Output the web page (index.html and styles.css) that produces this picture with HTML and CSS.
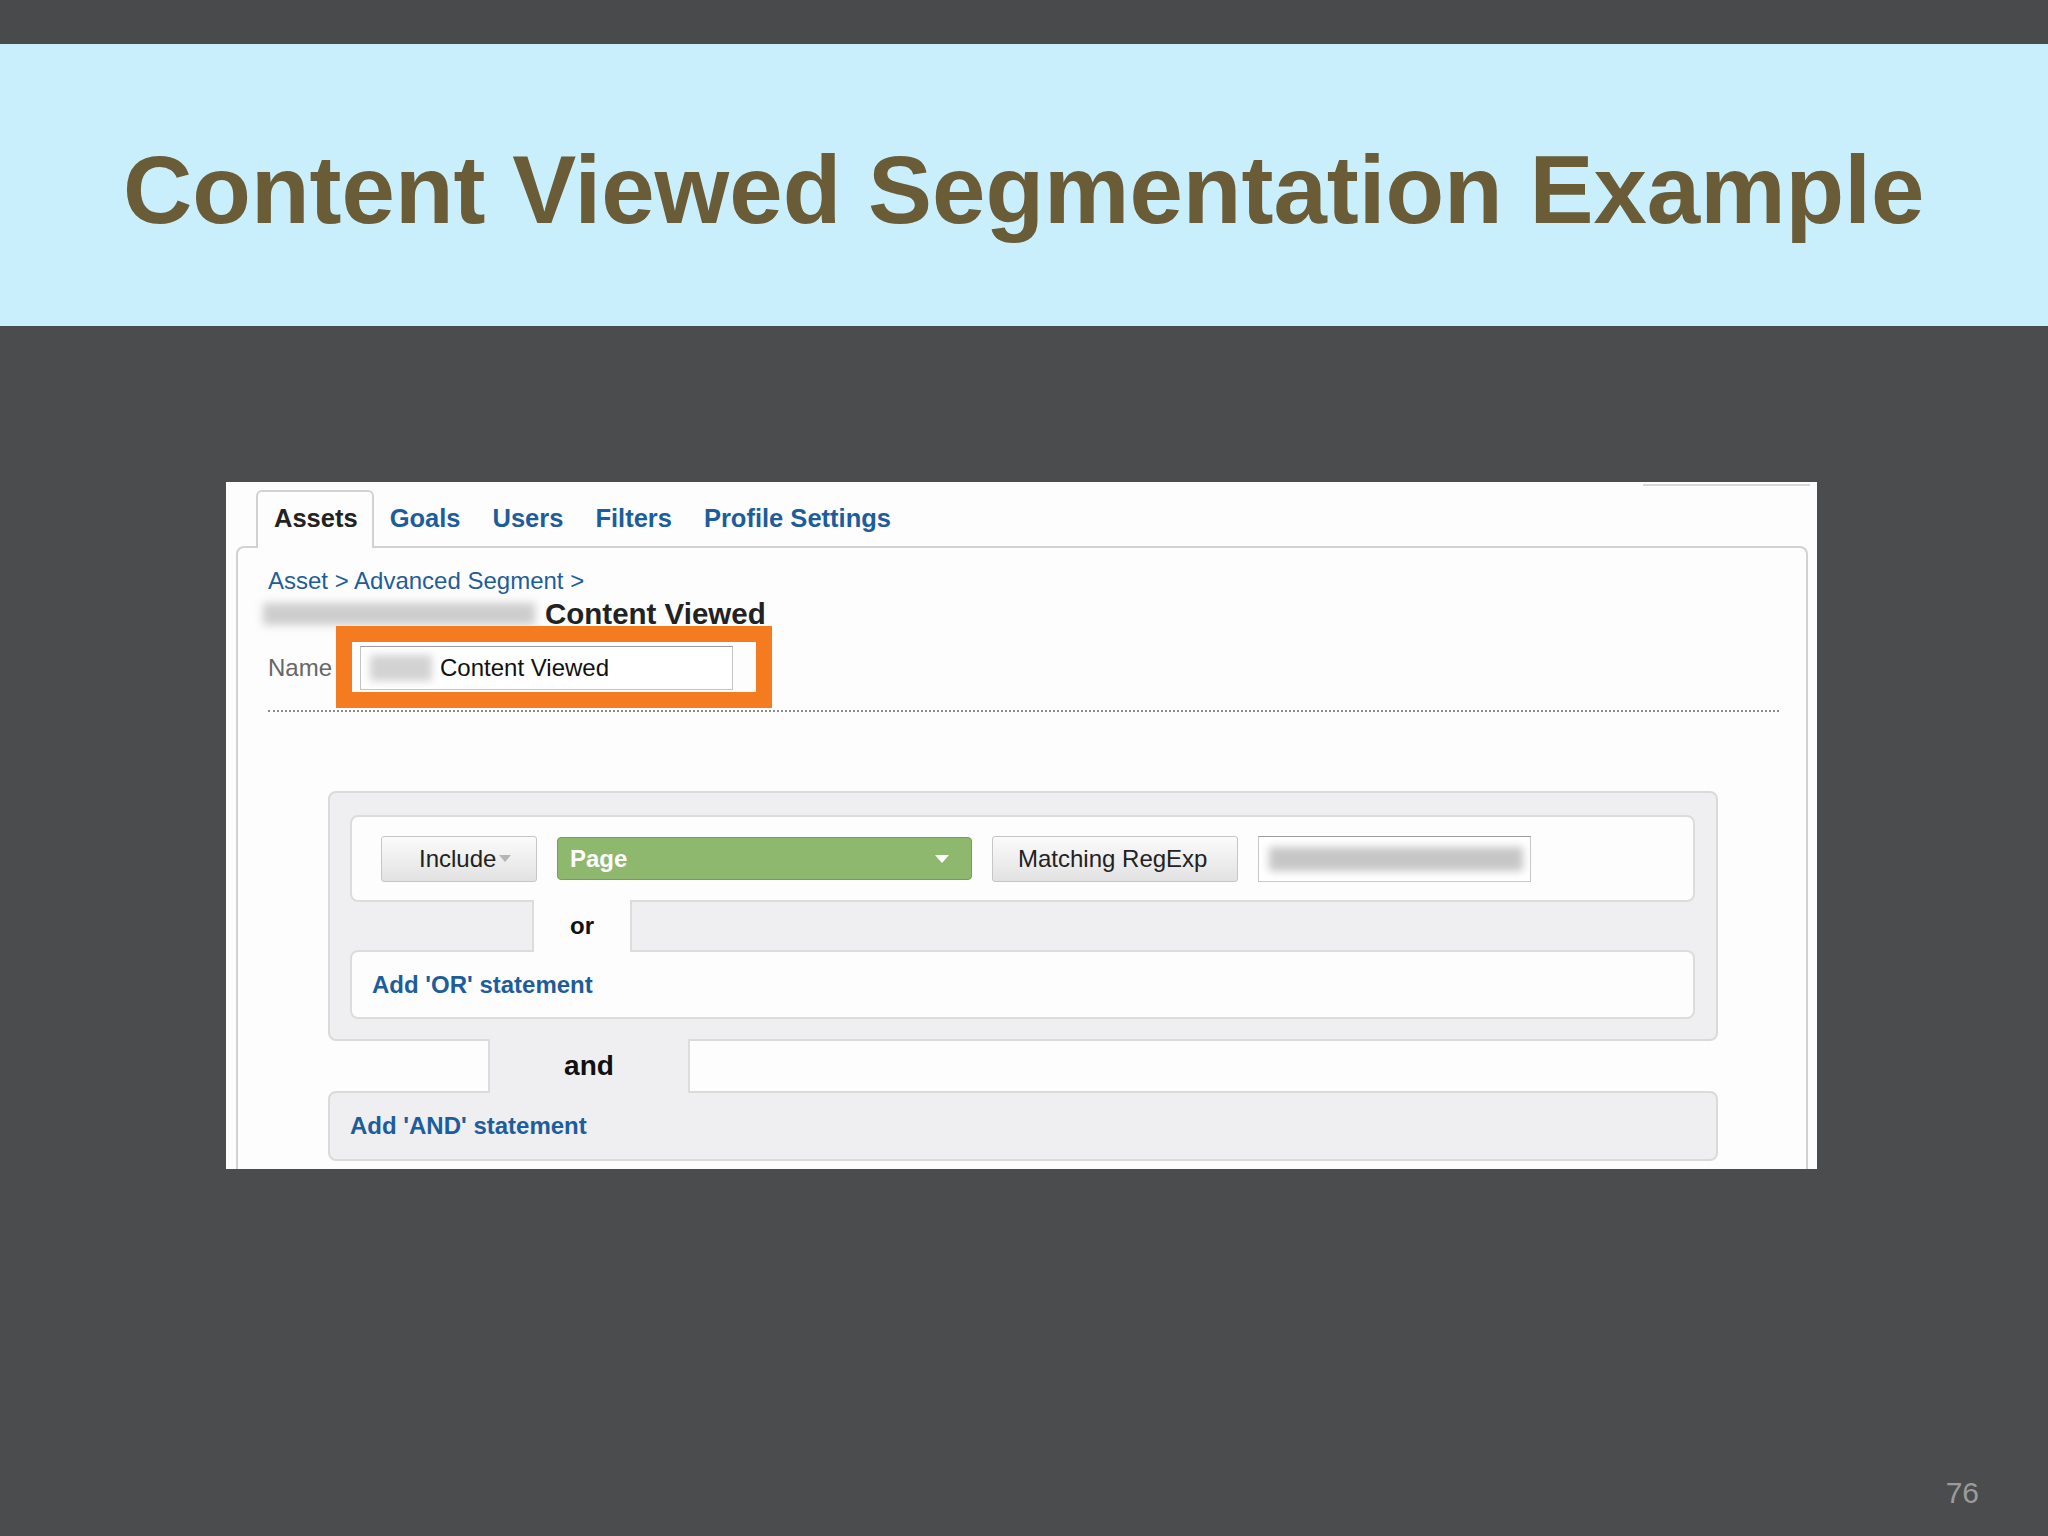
FILE: index.html
```html
<!DOCTYPE html>
<html lang="en">
<head>
<meta charset="utf-8">
<title>Content Viewed Segmentation Example</title>
<link rel="stylesheet" href="styles.css">
</head>
<body>
<div class="slide">
  <div class="topbar"></div>
  <header class="banner">
    <h1 class="title">Content Viewed Segmentation Example</h1>
  </header>
  <main class="stage">
    <div class="shot">
      <div class="shot-topline"></div>
      <nav class="tabs">
        <span class="tab tab-active">Assets</span>
        <span class="tab">Goals</span>
        <span class="tab">Users</span>
        <span class="tab">Filters</span>
        <span class="tab">Profile Settings</span>
      </nav>
      <section class="panel">
        <div class="crumb">Asset &gt; Advanced Segment &gt;</div>
        <div class="heading"><span class="blur blur-heading"></span><span class="heading-text">Content Viewed</span></div>
        <div class="name-row">
          <span class="name-label">Name</span>
          <div class="name-input"><span class="blur blur-name"></span><span class="name-value">Content Viewed</span></div>
          <div class="highlight"></div>
        </div>
        <div class="dotted"></div>
        <div class="segment">
          <div class="seg-box">
            <div class="cond-row">
              <span class="btn btn-include">Include<svg class="caret-gray" width="12" height="7" viewBox="0 0 12 7"><path d="M0 0h12L6 7z" fill="#b5b5b5"/></svg></span>
              <span class="dim-select">Page<svg class="caret-white" width="14" height="8" viewBox="0 0 14 8"><path d="M0 0h14L7 8z" fill="#ffffff"/></svg></span>
              <span class="btn btn-match">Matching RegExp</span>
              <span class="value-input"><span class="blur blur-value"></span></span>
            </div>
            <div class="conn conn-or">
              <div class="or-left"></div>
              <div class="notch or-notch">or</div>
            </div>
            <div class="add-box add-or">Add 'OR' statement</div>
          </div>
          <div class="conn conn-and">
            <div class="and-left"></div>
            <div class="notch and-notch">and</div>
          </div>
          <div class="add-and">Add 'AND' statement</div>
        </div>
      </section>
    </div>
  </main>
  <footer class="footer"><span class="page-num">76</span></footer>
</div>
</body>
</html>
```
FILE: styles.css
```css
html, body {
  margin: 0;
  padding: 0;
  background: #4a4c4e;
}
body {
  width: 2048px;
  height: 1536px;
  overflow: hidden;
  font-family: "Liberation Sans", Arial, Helvetica, sans-serif;
}
.slide {
  display: flex;
  flex-direction: column;
  width: 2048px;
  height: 1536px;
}
.topbar {
  height: 44px;
  background: #484a4c;
}
.banner {
  height: 282px;
  box-sizing: border-box;
  background: #c9eefc;
  padding: 98px 0 0 123px;
}
.title {
  margin: 0;
  font-size: 96px;
  line-height: 96px;
  font-weight: bold;
  color: #6a5c37;
  white-space: nowrap;
}
.stage {
  margin-top: 156px;
  padding-left: 226px;
}
.shot {
  width: 1591px;
  height: 687px;
  box-sizing: border-box;
  background: #fdfdfd;
  padding: 0 9px 0 10px;
  overflow: hidden;
  display: flex;
  flex-direction: column;
}
.shot-topline {
  align-self: flex-end;
  width: 167px;
  height: 2px;
  margin: 2px -2px 0 0;
  background: #d9d9d9;
}
.tabs {
  display: flex;
  height: 56px;
  margin: 4px 0 0 20px;
  font-size: 25.5px;
  font-weight: bold;
  color: #1d5d9b;
}
.tab {
  padding: 0 16px;
  line-height: 56px;
  white-space: nowrap;
}
.tab-active {
  position: relative;
  z-index: 1;
  height: 58px;
  box-sizing: border-box;
  line-height: 52px;
  padding: 0 14px 0 16px;
  color: #222222;
  background: #fdfdfd;
  border: 2px solid #d2d2d2;
  border-bottom: none;
  border-radius: 6px 6px 0 0;
}
.panel {
  flex: 1;
  border: 2px solid #d2d2d2;
  border-bottom: none;
  border-radius: 8px 8px 0 0;
  padding: 18px 27px 0 30px;
  background: #fdfdfd;
}
.crumb {
  font-size: 24px;
  line-height: 30px;
  color: #1d5d9b;
}
.heading {
  display: flex;
  align-items: center;
  margin-top: 3px;
  height: 30px;
}
.blur {
  display: block;
  background: #c3c3c3;
  filter: blur(4px);
}
.blur-heading {
  width: 272px;
  height: 22px;
  margin-left: -5px;
  margin-right: 10px;
  background: #cdcdcd;
}
.heading-text {
  font-size: 29.5px;
  font-weight: bold;
  color: #222222;
  line-height: 30px;
}
.name-row {
  position: relative;
  display: flex;
  align-items: center;
  margin-top: 17px;
  height: 44px;
}
.name-label {
  font-size: 24px;
  color: #666666;
  width: 92px;
}
.name-input {
  display: flex;
  align-items: center;
  width: 373px;
  height: 44px;
  box-sizing: border-box;
  border: 1px solid #c4c4c4;
  border-top-color: #9a9a9a;
  background: #ffffff;
  padding-left: 9px;
}
.blur-name {
  width: 62px;
  height: 26px;
  margin-right: 8px;
  background: #d2d2d2;
}
.name-value {
  font-size: 24px;
  color: #111111;
}
.highlight {
  position: absolute;
  left: 68px;
  top: -20px;
  width: 436px;
  height: 82px;
  box-sizing: border-box;
  border: 16px solid #f47b20;
}
.dotted {
  margin-top: 20px;
  border-top: 2px dotted #8a8a8a;
}
.segment {
  margin: 79px 61px 0 60px;
  display: flex;
  flex-direction: column;
}
.seg-box {
  background: #efeef0;
  border: 2px solid #dadada;
  border-radius: 8px;
  padding: 22px 21px 20px 20px;
}
.cond-row {
  display: flex;
  align-items: center;
  gap: 20px;
  height: 87px;
  box-sizing: border-box;
  background: #fdfdfd;
  border: 2px solid #dcdcdc;
  border-radius: 8px;
  padding-left: 29px;
}
.btn {
  display: flex;
  align-items: center;
  height: 46px;
  box-sizing: border-box;
  border: 1px solid #c6c6c6;
  border-radius: 3px;
  background: linear-gradient(#fbfbfb, #e2e2e2);
  font-size: 24px;
  color: #222222;
}
.btn-include {
  width: 156px;
  padding-left: 37px;
}
.caret-gray {
  margin-left: 3px;
}
.dim-select {
  display: flex;
  align-items: center;
  justify-content: space-between;
  width: 415px;
  height: 43px;
  box-sizing: border-box;
  padding: 0 22px 0 12px;
  background: #8fb86f;
  border: 1px solid #73a052;
  border-radius: 4px;
  font-size: 24px;
  font-weight: bold;
  color: #ffffff;
}
.btn-match {
  width: 246px;
  padding-left: 25px;
}
.value-input {
  display: flex;
  align-items: center;
  width: 273px;
  height: 46px;
  box-sizing: border-box;
  border: 1px solid #c8c8c8;
  border-top-color: #9c9c9c;
  background: #ffffff;
  padding-left: 10px;
}
.blur-value {
  width: 254px;
  height: 24px;
  background: #c6c6c6;
}
.conn {
  display: flex;
}
.conn-or {
  height: 48px;
}
.or-left {
  width: 182px;
}
.notch {
  position: relative;
  z-index: 1;
  display: flex;
  align-items: center;
  justify-content: center;
  font-weight: bold;
  color: #111111;
  box-sizing: border-box;
  border-left: 2px solid #dcdcdc;
  border-right: 2px solid #dcdcdc;
  margin: -2px 0;
}
.or-notch {
  width: 100px;
  height: 52px;
  background: #fdfdfd;
  font-size: 24px;
}
.add-box {
  height: 69px;
  box-sizing: border-box;
  background: #fdfdfd;
  border: 2px solid #dcdcdc;
  border-radius: 8px;
  padding-left: 20px;
  display: flex;
  align-items: center;
  font-size: 24px;
  font-weight: bold;
  color: #1d5d9b;
}
.conn-and {
  height: 50px;
}
.and-left {
  width: 160px;
}
.and-notch {
  width: 202px;
  height: 54px;
  background: #efeef0;
  font-size: 28px;
}
.add-and {
  height: 70px;
  box-sizing: border-box;
  background: #efeef0;
  border: 2px solid #dadada;
  border-radius: 8px;
  padding-left: 20px;
  display: flex;
  align-items: center;
  font-size: 24px;
  font-weight: bold;
  color: #1d5d9b;
}
.footer {
  padding: 309px 69px 0 0;
  text-align: right;
}
.page-num {
  font-size: 30px;
  line-height: 30px;
  color: #9b9b9b;
}
```
